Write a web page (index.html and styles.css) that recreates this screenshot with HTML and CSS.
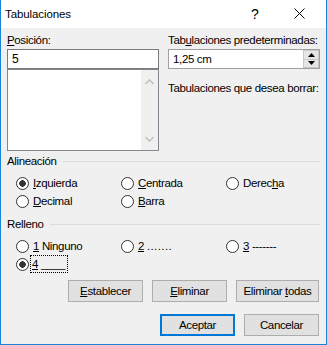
FILE: index.html
```html
<!DOCTYPE html>
<html lang="es">
<head>
<meta charset="UTF-8">
<title>Tabulaciones</title>
<link rel="stylesheet" href="styles.css">
</head>
<body>
<div class="win">
  <div class="titlebar">
    <span class="title">Tabulaciones</span>
    <span class="help">?</span>
    <span class="close">
      <svg width="11" height="11" viewBox="0 0 11 11"><path d="M0.5 0.5L10.5 10.5M10.5 0.5L0.5 10.5" stroke="#000" stroke-width="1" fill="none"/></svg>
    </span>
  </div>

  <div class="content">
    <!-- position + default tabs -->
    <div class="top">
      <div class="col">
        <div class="lbl"><u>P</u>osición:</div>
        <div class="field">5</div>
        <div class="listbox">
          <div class="list-area"></div>
          <div class="vscroll">
            <svg width="9" height="6" viewBox="0 0 9 6"><path d="M0.5 5L4.5 1L8.5 5" stroke="#c2c2c2" stroke-width="1.6" fill="none"/></svg>
            <svg width="9" height="6" viewBox="0 0 9 6"><path d="M0.5 1L4.5 5L8.5 1" stroke="#c2c2c2" stroke-width="1.6" fill="none"/></svg>
          </div>
        </div>
      </div>
      <div class="col">
        <div class="lbl">Tab<u>u</u>laciones predeterminadas:</div>
        <div class="spin">
          <span class="spin-val">1,25 cm</span>
          <div class="spin-btns">
            <span class="spin-btn"><svg width="7" height="4" viewBox="0 0 7 4"><path d="M0 4L3.5 0L7 4Z" fill="#000"/></svg></span>
            <span class="spin-btn"><svg width="7" height="4" viewBox="0 0 7 4"><path d="M0 0L3.5 4L7 0Z" fill="#000"/></svg></span>
          </div>
        </div>
        <div class="lbl lbl-del">Tabulaciones que desea borrar:</div>
      </div>
    </div>

    <!-- alignment -->
    <div class="group-head g-align">Alineación</div>
    <div class="radios">
      <span class="radio checked"><i></i><u>I</u>zquierda</span>
      <span class="radio"><i></i><u>C</u>entrada</span>
      <span class="radio"><i></i>Derec<u>h</u>a</span>
      <span class="radio"><i></i><u>D</u>ecimal</span>
      <span class="radio"><i></i><u>B</u>arra</span>
    </div>

    <!-- leader -->
    <div class="group-head g-fill">Relleno</div>
    <div class="radios">
      <span class="radio"><i></i><u>1</u>&nbsp;Ninguno</span>
      <span class="radio"><i></i><u>2</u>&nbsp;<span class="dots">.......</span></span>
      <span class="radio"><i></i><u>3</u>&nbsp;-------</span>
      <span class="radio checked"><i></i><span class="focus"><u>4</u>&nbsp;____</span></span>
    </div>

    <div class="btn-row">
      <button class="btn"><u>E</u>stablecer</button>
      <button class="btn"><u>E</u>liminar</button>
      <button class="btn wide">Eliminar <u>t</u>odas</button>
    </div>
    <div class="btn-row foot">
      <button class="btn default">Aceptar</button>
      <button class="btn">Cancelar</button>
    </div>
  </div>
</div>
</body>
</html>
```

FILE: styles.css
```css
:root{
  --face:#f0f0f0;--edge:#1883d7;--line:#dcdcdc;
  --font:"Liberation Sans",Arial,sans-serif;
}
*{box-sizing:border-box;margin:0;padding:0}
body{background:var(--face);font-family:var(--font);font-size:11.5px;color:#000}
u{text-decoration:underline;text-underline-offset:1px}

.win{width:327px;height:345px;border:1px solid var(--edge);border-top:0;background:var(--face);display:flex;flex-direction:column}
.titlebar{height:28px;background:#fff;display:flex;align-items:center;padding-left:4px}
.title{flex:1;font-size:11.5px;letter-spacing:-.1px}
.help{font-size:14px;width:20px;margin-right:22px;text-align:center;padding-bottom:1px}
.close{width:24px;margin-right:15px;display:flex;justify-content:center;padding-bottom:1px}

.content{flex:1;padding:5px 6px 0 6px;letter-spacing:-.35px}
.top{display:grid;grid-template-columns:152px 152px;column-gap:9px}
.col{display:flex;flex-direction:column}
.lbl{line-height:14px;height:14px;white-space:nowrap}
.field{margin-top:2px;height:20px;border:1px solid #7a7a7a;background:#fff;padding:2px 4px;line-height:14px;font-size:12px}
.listbox{height:82px;border:1px solid #828790;background:#fff;display:flex}
.list-area{flex:1}
.vscroll{width:17px;background:var(--face);display:flex;flex-direction:column;justify-content:space-between;align-items:center;padding:9px 0 8px}
.vscroll svg{display:block}

.spin{margin-top:2px;height:20px;border:1px solid #a0a0a0;background:#fff;display:flex;align-items:center;padding-left:4px}
.spin-val{flex:1}
.spin-btns{width:16px;height:18px;display:flex;flex-direction:column}
.spin-btn{flex:1;background:#e5e5e5;border:1px solid #c8c8c8;display:flex;align-items:center;justify-content:center}
.spin-btn + .spin-btn{border-top:0}
.spin-btn svg{display:block}
.lbl-del{margin-top:12px}

.group-head{display:flex;align-items:center;line-height:14px;height:14px}
.group-head::after{content:"";flex:1;height:1px;background:var(--line);margin:1px 0 0 6px}
.g-align{margin-top:3px}
.g-fill{margin-top:7px}

.radios{margin-top:6px;padding-left:9px;display:grid;grid-template-columns:105px 105px 95px;grid-auto-rows:18px}
.radio{display:flex;align-items:center;white-space:nowrap}
.radio i{width:13px;height:13px;border:1px solid #333;border-radius:50%;background:#fff;margin-right:4px;flex:none}
.radio.checked i{background:radial-gradient(circle,#333 0 3px,#fff 3.5px)}
.dots{letter-spacing:.4px}
.focus{outline:1px dotted #000;outline-offset:0;padding:1px 2px 1px 1px;margin-left:-2px;line-height:14px}

.btn-row{margin-top:7px;display:flex;justify-content:flex-end;gap:9px;padding-right:1px}
.btn-row.foot{margin-top:12px}
.btn{width:75px;height:22px;background:#e1e1e1;border:1px solid #adadad;font-family:var(--font);font-size:11.5px;letter-spacing:-.35px;color:#000}
.btn.wide{width:83px}
.btn.default{border:2px solid #0078d7}
```
